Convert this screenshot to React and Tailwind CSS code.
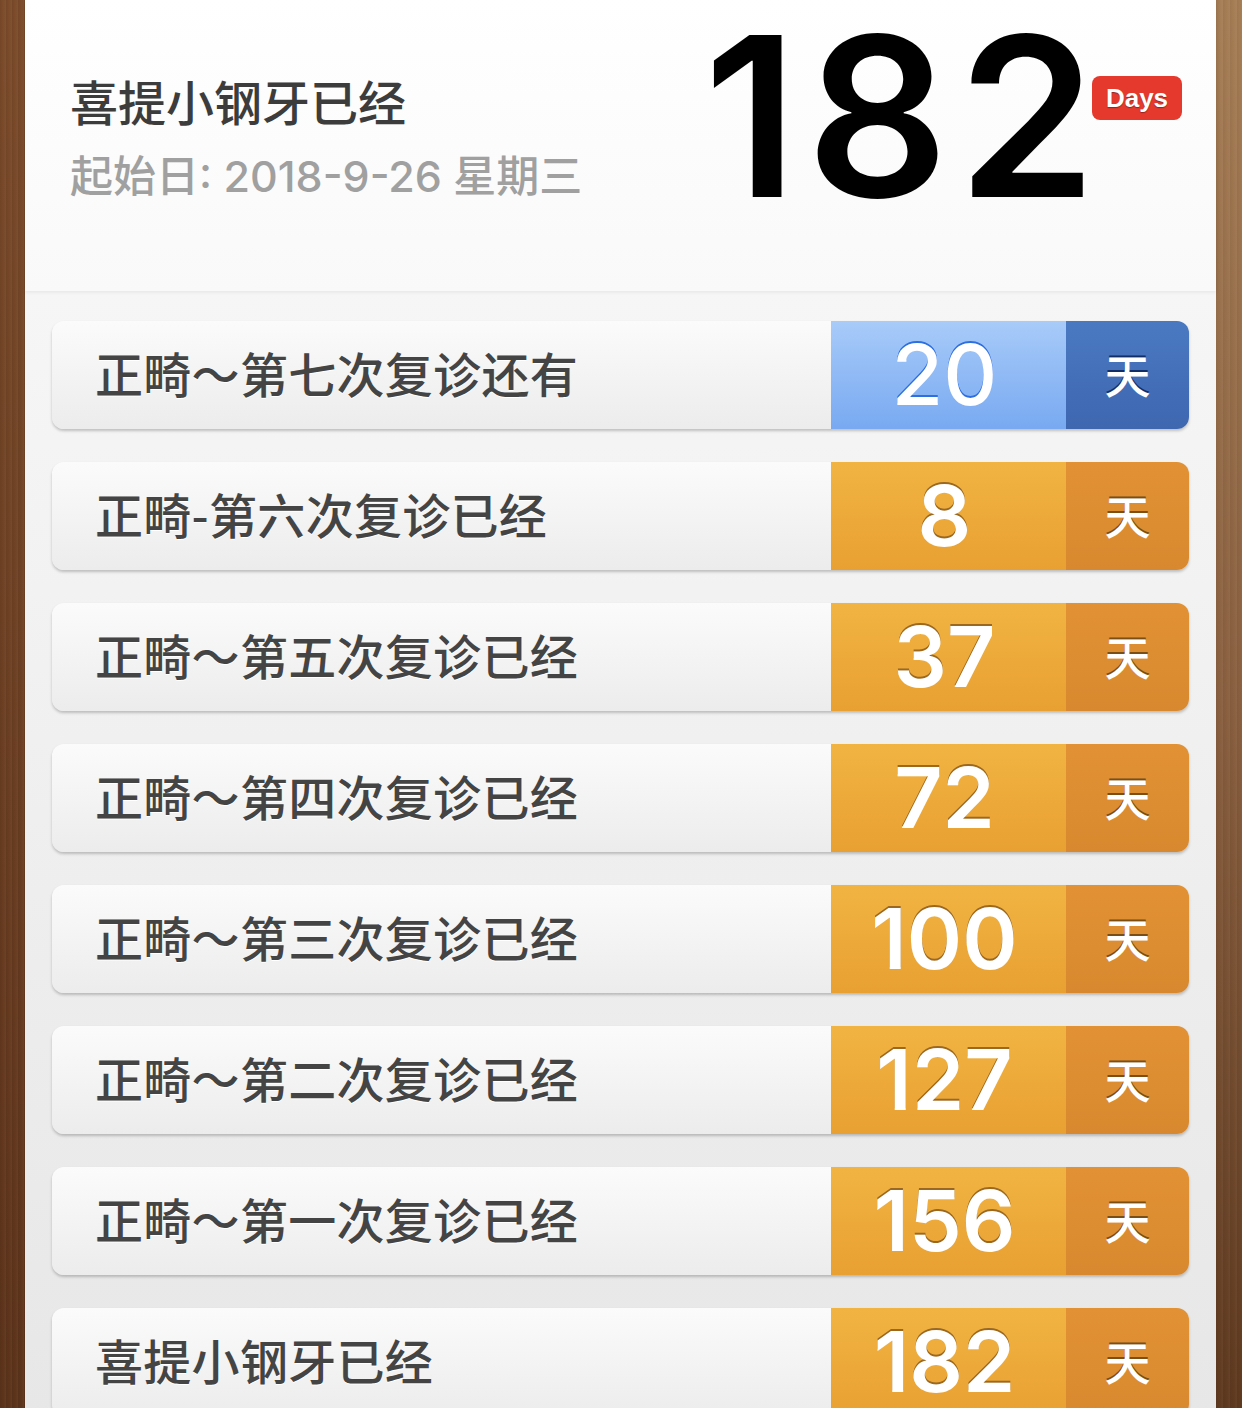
import React from "react";

const rows = [
  { label: "正畸～第七次复诊还有", n: "20", blue: true },
  { label: "正畸-第六次复诊已经", n: "8" },
  { label: "正畸～第五次复诊已经", n: "37" },
  { label: "正畸～第四次复诊已经", n: "72" },
  { label: "正畸～第三次复诊已经", n: "100" },
  { label: "正畸～第二次复诊已经", n: "127" },
  { label: "正畸～第一次复诊已经", n: "156" },
  { label: "喜提小钢牙已经", n: "182" },
];

function Row({ label, n, blue }) {
  return (
    <div className="flex h-[108px] shrink-0 rounded-[12px] shadow-[0_2px_3px_rgba(0,0,0,0.22)]">
      <div className="flex w-[779px] items-center rounded-l-[12px] bg-[linear-gradient(to_bottom,#fbfbfb,#ececec)] pb-[6px] pl-[43px]">
        <span className="text-[48px] font-medium leading-none tracking-[0.3px] text-[#444444] [text-shadow:0_1px_0_#ffffff] [font-family:'Noto_Sans_CJK_SC',sans-serif]">
          {label}
        </span>
      </div>
      {blue ? (
        <div className="flex w-[235px] items-center justify-center bg-[linear-gradient(to_bottom,#a8cbf9,#78a9f1)] pr-[8px]">
          <span className="text-[84px] font-medium leading-none text-white [text-shadow:0_-2px_0_#2d6fe0] [font-family:Inter,sans-serif]">
            {n}
          </span>
        </div>
      ) : (
        <div className="flex w-[235px] items-center justify-center bg-[linear-gradient(to_bottom,#f1b442,#e8a032)] pr-[8px]">
          <span className="text-[84px] font-semibold leading-none text-white [text-shadow:0_-2px_0_#9b681f] [font-family:Inter,sans-serif]">
            {n}
          </span>
        </div>
      )}
      {blue ? (
        <div className="flex w-[123px] items-center justify-center rounded-r-[12px] bg-[linear-gradient(to_bottom,#4a79c2,#3e67b0)] pb-[4px]">
          <span className="text-[46px] font-medium leading-none text-white [text-shadow:0_-2px_0_#122e66] [font-family:'Noto_Sans_CJK_SC',sans-serif]">
            天
          </span>
        </div>
      ) : (
        <div className="flex w-[123px] items-center justify-center rounded-r-[12px] bg-[linear-gradient(to_bottom,#e29234,#d8892f)] pb-[4px]">
          <span className="text-[46px] font-medium leading-none text-white [text-shadow:0_-2px_0_#7a4e14] [font-family:'Noto_Sans_CJK_SC',sans-serif]">
            天
          </span>
        </div>
      )}
    </div>
  );
}

export default function App() {
  return (
    <div className="flex h-[1408px] w-[1242px] overflow-hidden">
      <div className="w-[25px] shrink-0 bg-[repeating-linear-gradient(to_right,rgba(0,0,0,0.06)_0px,rgba(0,0,0,0)_3px,rgba(255,255,255,0.04)_6px),linear-gradient(to_bottom,#7c4c2b,#5c331a)]" />
      <div className="flex w-[1191px] shrink-0 flex-col">
        <div className="relative z-10 flex h-[291px] shrink-0 bg-[linear-gradient(to_bottom,#ffffff,#f9f9f9)] shadow-[0_1px_4px_rgba(0,0,0,0.08)]">
          <div className="flex flex-col pl-[45px] pt-[74px]">
            <div className="text-[48px] font-medium leading-[52px] text-[#3c3c3c] [font-family:'Noto_Sans_CJK_SC',sans-serif]">
              喜提小钢牙已经
            </div>
            <div className="mt-[25px] text-[43px] font-medium leading-[50px] text-[#a0a0a0] [font-family:Inter,'Noto_Sans_CJK_SC',sans-serif]">
              起始日: 2018-9-26 星期三
            </div>
          </div>
          <div className="ml-auto mr-[34px] flex items-start">
            <div className="pt-[1px] text-[222px] font-semibold leading-[232px] tracking-[9px] text-black [font-family:Inter,sans-serif]">
              182
            </div>
            <div className="ml-[-13px] mt-[76px] flex h-[44px] w-[90px] items-center justify-center rounded-[8px] bg-[#e4392c]">
              <span className="text-[26px] font-bold leading-none text-white [text-shadow:0_1px_1px_rgba(0,0,0,0.35)] [font-family:'Liberation_Sans',sans-serif]">
                Days
              </span>
            </div>
          </div>
        </div>
        <div className="flex flex-1 flex-col gap-[33px] bg-[linear-gradient(to_bottom,#f6f6f6,#e7e7e7)] px-[27px] pt-[30px]">
          {rows.map((r, i) => (
            <Row key={i} {...r} />
          ))}
        </div>
      </div>
      <div className="w-[26px] shrink-0 bg-[repeating-linear-gradient(to_right,rgba(0,0,0,0.05)_0px,rgba(0,0,0,0)_4px,rgba(255,255,255,0.04)_7px),linear-gradient(to_bottom,#a67e56,#8a6040_50%,#5e391f)]" />
    </div>
  );
}
